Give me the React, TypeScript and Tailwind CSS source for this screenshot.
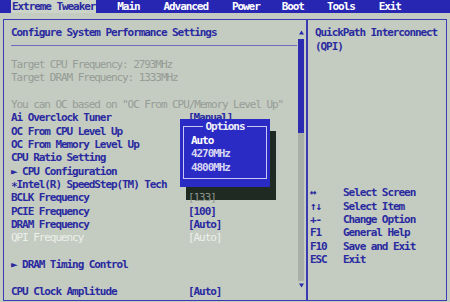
import React from 'react';

const ROW = 'h-[13.333px] leading-[13.333px] whitespace-pre';

type Tone = 'blue' | 'grey' | 'white';

type Item = {label?: string; value?: string; tone?: Tone; line?: boolean; shaded?: boolean};

const toneCls = (t: Tone = 'blue') =>
    t === 'grey' ? 'text-[#969c96]' : t === 'white' ? 'text-[#eef0ec]' : 'text-[#2a2aa0] font-bold';

const tabs = [
    {name: 'Extreme Tweaker', cls: 'ml-[11px] px-[1px] bg-[#ccd3c9] text-[#2a2aa0]'},
    {name: 'Main', cls: 'ml-[21px] text-white'},
    {name: 'Advanced', cls: 'ml-[24px] text-white'},
    {name: 'Power', cls: 'ml-[24px] text-white'},
    {name: 'Boot', cls: 'ml-[22px] text-white'},
    {name: 'Tools', cls: 'ml-[23px] text-white'},
    {name: 'Exit', cls: 'ml-[24px] text-white'},
];

const rows: Item[] = [
    {label: 'Configure System Performance Settings'},
    {line: true},
    {label: 'Target CPU Frequency: 2793MHz', tone: 'grey'},
    {label: 'Target DRAM Frequency: 1333MHz', tone: 'grey'},
    {},
    {label: 'You can OC based on "OC From CPU/Memory Level Up"', tone: 'grey'},
    {label: 'Ai Overclock Tuner', value: '[Manual]'},
    {label: 'OC From CPU Level Up'},
    {label: 'OC From Memory Level Up'},
    {label: 'CPU Ratio Setting'},
    {label: '► CPU Configuration'},
    {label: '∗Intel(R) SpeedStep(TM) Tech'},
    {label: 'BCLK Frequency', value: '[133]', shaded: true},
    {label: 'PCIE Frequency', value: '[100]'},
    {label: 'DRAM Frequency', value: '[Auto]'},
    {label: 'QPI Frequency', value: '[Auto]', tone: 'white'},
    {},
    {label: '► DRAM Timing Control'},
    {},
    {label: 'CPU Clock Amplitude', value: '[Auto]'},
];

const keys = [
    ['↔', 'Select Screen'],
    ['↑↓', 'Select Item'],
    ['+-', 'Change Option'],
    ['F1', 'General Help'],
    ['F10', 'Save and Exit'],
    ['ESC', 'Exit'],
];

const SettingRow = ({row}: { row: Item }) => {
    if (row.line) {
        return <div className={ROW}>
            <div className="mt-[5px] mr-[1px] border-t border-[#6a6ac0]"/>
        </div>;
    }
    return (
        <div className={`${ROW} flex ${toneCls(row.tone)}`}>
            <span className="w-[177px] shrink-0">{row.label}</span>
            {row.value &&
                <span className={row.shaded ? 'relative z-20 text-[#8e948e] font-normal' : ''}>{row.value}</span>}
        </div>
    );
};

const Scrollbar = () => (
    <div className="w-[6px] flex flex-col items-center pt-[10px]">
        <svg width="5" height="5" viewBox="0 0 5 5"><path d="M2.5 0.5 L5 4.5 L0 4.5 Z" fill="#2a2ab0"/></svg>
        <div className="mt-[4px] w-[6px] h-[94px] bg-[#2c2cb2]"/>
        <div className="w-[6px] h-[148px] bg-[#a9aea8]"/>
        <div className="mt-[2px]">
            <svg width="5" height="5" viewBox="0 0 5 5"><path d="M0 0.5 L5 0.5 L2.5 4.5 Z" fill="#2a2ab0"/></svg>
        </div>
    </div>
);

const OptionsPopup = () => (
    <>
        <div className="absolute left-[186px] top-[131px] w-[90px] h-[69px] bg-[#1e2a22] z-10"/>
        <div className="absolute left-[180px] top-[119px] w-[90px] h-[68px] bg-[#2a2ac4] z-30">
            <div className="absolute left-[3px] right-[3px] top-[7px] bottom-[8px] border border-[#c8c8f0]"/>
            <div className="absolute left-0 right-0 top-[1px] flex justify-center">
                <span className={`${ROW} px-[3px] bg-[#2a2ac4] text-[#eeeef8] font-bold`}>Options</span>
            </div>
            <div className="absolute left-[11px] top-[15px] flex flex-col">
                <span className={`${ROW} text-white font-bold`}>Auto</span>
                <span className={`${ROW} text-[#d6d6f2] font-bold`}>4270MHz</span>
                <span className={`${ROW} text-[#d6d6f2] font-bold`}>4800MHz</span>
            </div>
        </div>
    </>
);

export default function App() {
    return (
        <div className="relative w-[450px] h-[302px] overflow-hidden bg-[#c4cbc1] font-['DejaVu_Sans_Mono','Liberation_Mono',monospace] text-[11px] tracking-[-1.07px]">
            <div className="h-[13px] bg-[#2626b2] flex items-stretch">
                {tabs.map(t =>
                    <span key={t.name} className={`${t.cls} leading-[13px] font-bold whitespace-pre`}>{t.name}</span>
                )}
            </div>

            <div className="mt-[6px] ml-[3px] w-[444px] h-[282px] border border-[#3a3ab2] flex">
                <div className="w-[304px] flex border-r-2 border-[#3a3ab2]">
                    <div className="w-[294px] pl-[7px] pt-[6.333px]">
                        {rows.map((r, i) => <SettingRow key={i} row={r}/>)}
                    </div>
                    <Scrollbar/>
                </div>

                <div className="flex-1 pt-[6.333px] text-[#2a2aa0] font-bold">
                    <div className={`${ROW} pl-[7px]`}>QuickPath Interconnect</div>
                    <div className={`${ROW} pl-[7px]`}>(QPI)</div>
                    <div className="h-[133.33px]"/>
                    {keys.map(([k, d]) =>
                        <div key={k} className={`${ROW} flex pl-[2px]`}>
                            <span className="w-[33px] shrink-0">{k}</span>
                            <span>{d}</span>
                        </div>
                    )}
                </div>
            </div>

            <OptionsPopup/>
        </div>
    );
}
